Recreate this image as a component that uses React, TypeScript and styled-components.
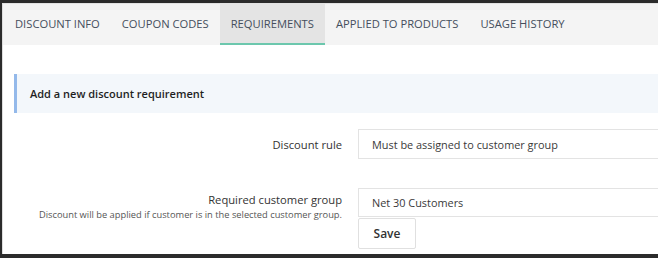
import React from 'react'
import styled, { createGlobalStyle } from 'styled-components'

const GlobalStyle = createGlobalStyle`
  html, body {
    margin: 0;
    padding: 0;
    background: #2b2b2b;
    overflow: hidden;
  }
  body {
    font-family: "Open Sans", "Noto Sans", sans-serif;
  }
`

const tabs = ['DISCOUNT INFO', 'COUPON CODES', 'REQUIREMENTS', 'APPLIED TO PRODUCTS', 'USAGE HISTORY']

const App = () => {
    return (
        <>
            <GlobalStyle />
            <Frame>
                <Panel>
                    <TabBar>
                        {tabs.map((t) => (
                            <Tab key={t} $active={t === 'REQUIREMENTS'}>{t}</Tab>
                        ))}
                    </TabBar>
                    <Content>
                        <SectionHeader>Add a new discount requirement</SectionHeader>
                        <FormRow>
                            <LabelCol $center>
                                <Label>Discount rule</Label>
                            </LabelCol>
                            <FieldCol>
                                <Field>Must be assigned to customer group</Field>
                            </FieldCol>
                        </FormRow>
                        <FormRow $gap={29}>
                            <LabelCol>
                                <Label>Required customer group</Label>
                                <Hint>Discount will be applied if customer is in the selected customer group.</Hint>
                            </LabelCol>
                            <FieldCol>
                                <Field $small>Net 30 Customers</Field>
                                <SaveButton>Save</SaveButton>
                            </FieldCol>
                        </FormRow>
                    </Content>
                </Panel>
            </Frame>
        </>
    )
}

const Frame = styled.div`
  height: 258px;
  box-sizing: border-box;
  padding: 3px 0 4px 2px;
  background: #2b2b2b;
`
const Panel = styled.div`
  height: 100%;
  box-sizing: border-box;
  background: #fff;
  border-top: 1px solid #e2e2e2;
  border-left: 1px solid #dedede;
  overflow: hidden;
`
const TabBar = styled.div`
  display: flex;
  height: 41px;
  background: #f4f4f4;
  padding-left: 1px;
`
const Tab = styled.div<{ $active?: boolean }>`
  display: flex;
  align-items: center;
  padding: 0 11px;
  font-size: 11.2px;
  color: #454e5c;
  white-space: nowrap;
  background: ${(p) => (p.$active ? '#e4e4e4' : 'transparent')};
  border-bottom: 2px solid ${(p) => (p.$active ? '#6cc7ad' : 'transparent')};
  box-sizing: border-box;
`
const Content = styled.div`
  padding: 29px 0 0 11px;
`
const SectionHeader = styled.div`
  height: 39px;
  display: flex;
  align-items: center;
  padding-left: 13px;
  background: #f3f7fb;
  border-left: 3px solid #94b9ea;
  font-size: 11px;
  font-weight: 600;
  color: #1f1f1f;
  white-space: nowrap;
`
const FormRow = styled.div<{ $gap?: number }>`
  display: flex;
  margin-top: ${(p) => p.$gap ?? 16}px;
`
const LabelCol = styled.div<{ $center?: boolean }>`
  flex: 0 0 328px;
  display: flex;
  flex-direction: column;
  align-items: flex-end;
  justify-content: ${(p) => (p.$center ? 'center' : 'flex-start')};
  padding-top: ${(p) => (p.$center ? 0 : 4)}px;
  margin-right: 16px;
`
const Label = styled.div`
  font-size: 11.2px;
  color: #333;
  white-space: nowrap;
`
const Hint = styled.div`
  font-size: 9.3px;
  color: #555;
  margin-top: 1px;
  white-space: nowrap;
`
const FieldCol = styled.div`
  flex: 1;
  display: flex;
  flex-direction: column;
  min-width: 0;
`
const Field = styled.div<{ $small?: boolean }>`
  height: ${(p) => (p.$small ? 29 : 30)}px;
  box-sizing: border-box;
  width: 400px;
  border: 1px solid #e3e3e3;
  display: flex;
  align-items: center;
  padding-left: 13px;
  font-size: 10.9px;
  color: #3a3a3a;
  white-space: nowrap;
`
const SaveButton = styled.button`
  align-self: flex-start;
  width: 58px;
  height: 31px;
  margin-top: 1px;
  background: #fff;
  border: 1px solid #e0e0e0;
  border-radius: 2px;
  font-family: "Open Sans", "Noto Sans", sans-serif;
  font-size: 12px;
  font-weight: 600;
  color: #333;
  padding: 0;
`

export default App
